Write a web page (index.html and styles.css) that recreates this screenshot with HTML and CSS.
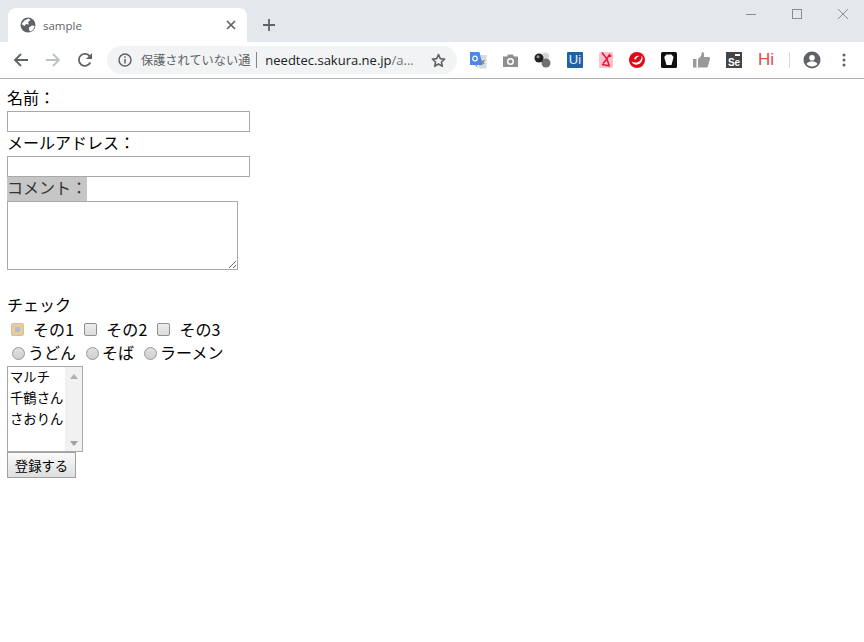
FILE: index.html
```html
<!DOCTYPE html>
<html lang="ja">
<head>
<meta charset="utf-8">
<title>sample</title>
<link rel="stylesheet" href="styles.css">
</head>
<body>
<header class="chrome">
  <div class="tabstrip">
    <div class="tab">
      <svg class="globe" width="16" height="16" viewBox="0 0 16 16"><circle cx="8" cy="8" r="7.500" fill="#5f6368"/><path d="M1.500 7l3-3.500 4-2 2 1.500-2.500 2 1 2.500-3-.5-1.500 2zM9 10.500l3-2 2.800.5-1.800 4-3 1.500-1-2z" fill="#fff"/></svg>
      <span class="tab-title">sample</span>
      <svg class="tab-close" width="10" height="10" viewBox="0 0 10 10"><path d="M1 1l8 8M9 1l-8 8" stroke="#5f6368" stroke-width="1.700"/></svg>
    </div>
    <svg class="new-tab" width="12" height="12" viewBox="0 0 12 12"><path d="M6 0v12M0 6h12" stroke="#5f6368" stroke-width="1.800"/></svg>
    <div class="window-controls">
      <svg width="10" height="10" viewBox="0 0 10 10"><path d="M0 5.500h10" stroke="#8a8d91"/></svg>
      <svg width="10" height="10" viewBox="0 0 10 10"><rect x=".5" y=".5" width="9" height="9" fill="none" stroke="#8a8d91"/></svg>
      <svg width="10" height="10" viewBox="0 0 10 10"><path d="M0 0l10 10M10 0l-10 10" stroke="#8a8d91"/></svg>
    </div>
  </div>
  <div class="toolbar">
    <svg class="nav-back" width="16" height="16" viewBox="0 0 16 16"><path d="M15 8H2M8 2L2 8l6 6" fill="none" stroke="#5f6368" stroke-width="1.800"/></svg>
    <svg class="nav-forward" width="16" height="16" viewBox="0 0 16 16"><path d="M1 8h13M8 2l6 6-6 6" fill="none" stroke="#bdc1c6" stroke-width="1.800"/></svg>
    <svg class="nav-reload" width="16" height="16" viewBox="0 0 16 16"><path d="M13.300 10.500A6 6 0 1 1 13 4.700" fill="none" stroke="#5f6368" stroke-width="1.800"/><path d="M15 1v6H9z" fill="#5f6368"/></svg>
    <div class="omnibox">
      <svg class="info" width="14" height="14" viewBox="0 0 14 14"><circle cx="7" cy="7" r="6" fill="none" stroke="#5f6368" stroke-width="1.500"/><path d="M7 6v4.500" stroke="#5f6368" stroke-width="1.500"/><path d="M7 3.300v1.500" stroke="#5f6368" stroke-width="1.500"/></svg>
      <span class="security">保護されていない通</span>
      <span class="divider"></span>
      <span class="url">needtec.sakura.ne.jp<span class="url-path">/a...</span></span>
      <svg class="star" width="15" height="15" viewBox="0 0 16 16"><path d="M8 1.700l1.900 4.300 4.600.5-3.400 3.100 1 4.600L8 11.800l-4.100 2.400 1-4.600L1.500 6.500 6.100 6z" fill="none" stroke="#5f6368" stroke-width="1.700" stroke-linejoin="round"/></svg>
    </div>
    <div class="extensions">
      <svg width="17" height="17" viewBox="0 0 17 17"><path d="M6 3h10.500v13.500H9z" fill="#d8dade"/><path d="M0 0h9.500l3 13H6.500l1.500 3.500L5 13H0z" fill="#4d87ed"/><circle cx="5" cy="6.500" r="2.300" fill="none" stroke="#fff" stroke-width="1.200"/><path d="M11 8l3 4M14.500 8l-4 5" stroke="#6f7a80" stroke-width="1.100"/></svg>
      <svg width="15" height="13" viewBox="0 0 15 13"><path d="M0 2.500h4L5 .5h5l1 2h4V13H0z" fill="#8f8f8f"/><circle cx="7.500" cy="7.500" r="3.500" fill="#fff"/><circle cx="7.500" cy="7.500" r="2" fill="#8f8f8f"/></svg>
      <svg width="17" height="16" viewBox="0 0 17 16"><circle cx="11.500" cy="4" r="3.500" fill="#d6d6d6"/><circle cx="12" cy="11" r="4.500" fill="#707070"/><circle cx="5" cy="6" r="4.500" fill="#222"/><circle cx="4" cy="4.800" r="1.500" fill="#999"/></svg>
      <span class="ext-ui">Ui</span>
      <svg width="14" height="16" viewBox="0 0 14 16"><rect width="14" height="16" rx="1.500" fill="#fdc4cf"/><path d="M3 .5l5 6.500 2 6M11 2L7 8l-3 3.500M9.500 4.500l3-.8M3 12.500l8 1.500" fill="none" stroke="#e8102e" stroke-width="1.500"/></svg>
      <svg width="16" height="16" viewBox="0 0 16 16"><circle cx="8" cy="8" r="8" fill="#e30613"/><path d="M2.500 9.500c1.500 3.500 6 4 8.500 2s3.500-6 1.500-8c.5 3-1 5.500-3.500 6.500s-4.500.5-6.500-.5z" fill="#fff"/><path d="M5 7c.5-2 3-4 5.500-3-2 .5-3 1.500-3.500 3.500z" fill="#fff"/></svg>
      <svg width="16" height="16" viewBox="0 0 16 16"><rect width="16" height="16" rx="1.500" fill="#111"/><path d="M5.500 2.500h5l2 2.500-.7 3-1.300 5h-5L4 8l-.7-3z" fill="#fff"/></svg>
      <svg width="17" height="16" viewBox="0 0 17 16"><rect x="0" y="7" width="3.500" height="8.500" fill="#999"/><path d="M5 7l3-3 1-4c2 0 2.500 2 2 5h5c1 0 1 1 1 2l-2 7c0 1-1 1.500-2 1.500H5z" fill="#999"/></svg>
      <span class="ext-se"><span class="se-tab"></span>Se</span>
      <span class="ext-hi">Hi</span>
    </div>
    <span class="toolbar-sep"></span>
    <svg class="avatar" width="18" height="18" viewBox="0 0 18 18"><circle cx="9" cy="9" r="8.500" fill="#5f6368"/><circle cx="9" cy="6.700" r="2.800" fill="#fff"/><path d="M3.500 13c1-2 3.500-2.800 5.500-2.800s4.500.8 5.500 2.800c-1.200 1.500-3.300 2.500-5.500 2.500s-4.300-1-5.500-2.500z" fill="#fff"/></svg>
    <svg class="menu" width="4" height="14" viewBox="0 0 4 14"><circle cx="2" cy="2" r="1.500" fill="#5f6368"/><circle cx="2" cy="7" r="1.500" fill="#5f6368"/><circle cx="2" cy="12" r="1.500" fill="#5f6368"/></svg>
  </div>
</header>
<form class="page">
  <label class="line">名前：</label>
  <input class="field" type="text">
  <label class="line">メールアドレス：</label>
  <input class="field" type="text">
  <label class="line"><span class="selected">コメント：</span></label>
  <textarea class="comment"></textarea>
  <div class="line check-title">チェック</div>
  <div class="line options checks">
    <input type="checkbox" class="box focused"><span class="opt">その1</span>
    <input type="checkbox" class="box"><span class="opt">その2</span>
    <input type="checkbox" class="box"><span class="opt">その3</span>
  </div>
  <div class="line options radios">
    <input type="radio" name="r" class="round"><span class="ropt">うどん</span>
    <input type="radio" name="r" class="round"><span class="ropt">そば</span>
    <input type="radio" name="r" class="round"><span class="ropt">ラーメン</span>
  </div>
  <div class="listbox">
    <ul class="list-items">
      <li>マルチ</li>
      <li>千鶴さん</li>
      <li>さおりん</li>
    </ul>
    <div class="scrollbar"><span class="arrow up"></span><span class="arrow down"></span></div>
  </div>
  <button class="submit" type="button">登録する</button>
</form>
</body>
</html>
```
FILE: styles.css
```css
* { box-sizing: border-box; }
html, body { margin: 0; padding: 0; background: #fff; }
body { height: 642px; overflow: hidden; font-family: "Liberation Sans", "Noto Sans CJK JP", sans-serif; color: #000; }
.chrome { height: 79px; border-bottom: 1px solid #b0b2b4; }
.tabstrip { height: 42px; background: #e4e7eb; display: flex; align-items: flex-end; padding-left: 8px; position: relative; }
.tab { width: 239px; height: 34px; background: #fff; border-radius: 8px 8px 0 0; display: flex; align-items: center; padding: 0 11px 0 12px; font-size: 11.500px; color: #5f6368; }
.globe { flex: none; margin-top: -1px; }
.tab-title { margin-left: 7px; flex: 1; font-family: "Open Sans", sans-serif; margin-top: 1px; }
.tab-close { flex: none; margin-top: -1px; }
.new-tab { margin: 0 0 11px 16px; }
.window-controls { position: absolute; right: 16px; top: 9px; display: flex; gap: 36px; }
.toolbar { height: 36px; display: flex; align-items: center; background: #fff; }
.nav-back { margin-left: 13px; }
.nav-forward { margin-left: 16px; }
.nav-reload { margin-left: 16px; }
.omnibox { margin-left: 14px; width: 350px; height: 28px; border-radius: 14px; background: #f1f3f4; display: flex; align-items: center; padding-left: 11px; font-size: 13px; white-space: nowrap; }
.info { flex: none; }
.security { margin-left: 9px; color: #5f6368; font-family: "Noto Sans CJK JP", sans-serif; font-size: 12.200px; }
.divider { flex: none; width: 1px; height: 16px; background: #80868b; margin: 0 8px 0 6px; }
.url { flex: none; color: #202124; font-family: "Open Sans", sans-serif; font-size: 13px; width: 164px; }
.url-path { color: #70757a; }
.star { flex: none; margin-left: 2px; }
.extensions { display: flex; align-items: center; margin-left: 13px; width: 308px; position: relative; height: 20px; gap: 16px; }
.extensions svg { flex: none; }
.ext-ui { width: 16px; height: 16px; background: #1e62a8; color: #e8f0f8; font-size: 13px; line-height: 16px; text-align: center; border-radius: 1px; }
.ext-se { position: relative; width: 16px; height: 16px; background: #444; color: #fff; font-size: 10px; font-weight: bold; line-height: 21px; text-align: center; }
.se-tab { position: absolute; top: 2px; right: 2px; width: 5px; height: 2px; background: #fff; }
.ext-hi { color: #e8474a; font-size: 17px; line-height: 16px; width: 16px; text-align: center; }
.toolbar-sep { width: 1px; height: 16px; background: #d6d8da; margin-left: 0; position: absolute; left: 789px; }
.avatar { position: absolute; left: 803px; }
.menu { position: absolute; left: 842px; }
.page { display: flow-root; padding: 8px 0 0 7px; font-size: 16px; }
.line { display: block; height: 24px; line-height: 21px; font-family: "Noto Sans CJK JP", sans-serif; font-size: 16px; white-space: nowrap; }
.field { display: block; width: 243px; height: 21px; border: 1px solid #a9a9a9; margin: 0; padding: 0; background: #fff; }
.selected { display: inline-block; width: 80px; height: 24px; background: #c6c6c6; color: #333; }
.comment { display: block; width: 231px; height: 69px; border: 1px solid #a9a9a9; margin: 0; padding: 2px; }
.check-title { height: 23px; margin-top: 24px; }
.options { display: flex; align-items: center; }
.box { appearance: none; flex: none; width: 13px; height: 13px; margin: 0 9px 0 4px; border: 1px solid #8f8f8f; border-radius: 2px; background: linear-gradient(#ededed, #dcdcdc); }
.focused { background: linear-gradient(#a9bfdc, #a9bfdc) center / 5px 5px no-repeat, #eccb94; border-color: #c9c2b4; }
.opt { margin-right: 6px; letter-spacing: .1px; }
.round { appearance: none; flex: none; width: 13px; height: 13px; margin: 0 3px 0 5px; border: 1px solid #979797; border-radius: 50%; background: linear-gradient(#e0e0e0, #d0d0d0); }
.ropt { margin-right: 5px; margin-top: -2px; }
.listbox { width: 76px; height: 86px; border: 1px solid #a9a9a9; display: flex; margin-top: 1px; }
.list-items { list-style: none; margin: 0; padding: 0 0 0 2px; flex: 1; font-family: "Noto Sans CJK JP", sans-serif; font-size: 13.333px; }
.list-items li { height: 21px; line-height: 20px; white-space: nowrap; }
.scrollbar { width: 17px; flex: none; background: #f1f1f1; position: relative; display: flex; flex-direction: column; justify-content: space-between; align-items: center; padding: 7px 0 5px; }
.arrow { width: 0; height: 0; border-left: 4px solid transparent; border-right: 4px solid transparent; }
.up { border-bottom: 5px solid #b0b0b0; }
.down { border-top: 5px solid #a0a0a0; }
.submit { display: block; width: 69px; height: 26px; margin: 0; padding: 0; border: 1px solid #a0a0a0; border-radius: 0; background: linear-gradient(#fafafa, #dedede); font-family: "Noto Sans CJK JP", sans-serif; font-size: 13.333px; color: #000; }
```
